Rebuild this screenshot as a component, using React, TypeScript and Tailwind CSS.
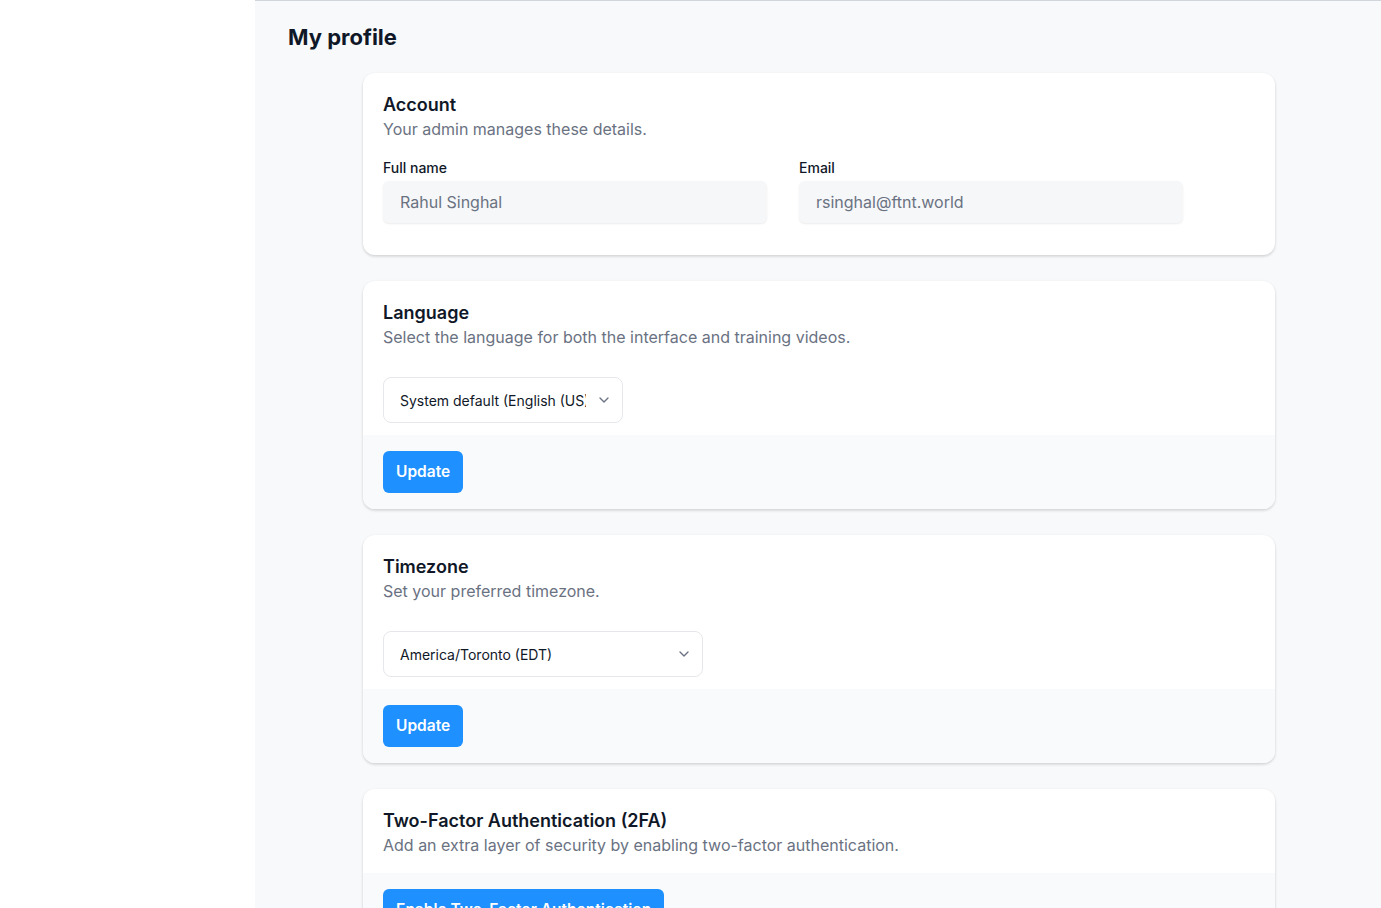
import { ChevronDown } from 'lucide-react'

function Section({
  title,
  subtitle,
  children,
  footer,
  bodyPad = 'pb-3',
}: {
  title: string
  subtitle: string
  children?: React.ReactNode
  footer?: React.ReactNode
  bodyPad?: string
}) {
  return (
    <div className="bg-white rounded-xl shadow-[0_1px_3px_rgba(0,0,0,0.12),0_2px_3px_rgba(0,0,0,0.06)] overflow-hidden">
      <div className={`px-5 pt-5 ${bodyPad}`}>
        <h2 className="text-lg leading-6 font-semibold text-gray-900">{title}</h2>
        <p className="text-base leading-6 text-gray-500">{subtitle}</p>
        {children}
      </div>
      {footer && <div className="bg-gray-50 px-5 py-4">{footer}</div>}
    </div>
  )
}

function Select({ value, width }: { value: string; width: string }) {
  return (
    <div className={`mt-7 flex items-center h-[46px] rounded-lg border border-gray-200 bg-white pl-4 pr-2.5 ${width}`}>
      <span className="flex-1 overflow-hidden whitespace-nowrap text-sm leading-5 pt-0.5 text-gray-900">{value}</span>
      <ChevronDown className="w-4 h-4 text-gray-500 ml-[10px] shrink-0" strokeWidth={2} />
    </div>
  )
}

function UpdateButton({ label = 'Update' }: { label?: string }) {
  return (
    <button className="h-[42px] px-[13px] rounded-md bg-[#1e90ff] text-white text-[15.5px] font-semibold">
      {label}
    </button>
  )
}

export default function App() {
  return (
    <div
      className="flex h-[908px] overflow-hidden bg-white"
      style={{ fontFamily: 'Inter, "Noto Sans", sans-serif' }}
    >
      {/* Sidebar */}
      <aside className="w-[255px] shrink-0 bg-white" />

      {/* Main */}
      <main className="flex-1 bg-[#f8f9fb] border-t border-gray-300 px-[33px] pt-5">
        <h1 className="text-[22px] leading-8 font-bold text-gray-900 mb-5">My profile</h1>

        <div className="w-[912px] ml-[75px] flex flex-col gap-[26px]">
          <Section title="Account" subtitle="Your admin manages these details." bodyPad="pb-8">
            <div className="grid grid-cols-2 gap-8 w-[800px] mt-[17px]">
              <div>
                <label className="block text-sm leading-5 font-medium text-gray-900">Full name</label>
                <div className="mt-[3px] h-[42px] flex items-center rounded-md bg-[#f6f7f9] pl-[17px] text-base text-gray-500 shadow-[0_1px_2px_rgba(0,0,0,0.08)]">
                  Rahul Singhal
                </div>
              </div>
              <div>
                <label className="block text-sm leading-5 font-medium text-gray-900">Email</label>
                <div className="mt-[3px] h-[42px] flex items-center rounded-md bg-[#f6f7f9] pl-[17px] text-base text-gray-500 shadow-[0_1px_2px_rgba(0,0,0,0.08)]">
                  rsinghal@ftnt.world
                </div>
              </div>
            </div>
          </Section>

          <Section
            title="Language"
            subtitle="Select the language for both the interface and training videos."
            footer={<UpdateButton />}
          >
            <Select value="System default (English (US))" width="w-[240px]" />
          </Section>

          <Section
            title="Timezone"
            subtitle="Set your preferred timezone."
            footer={<UpdateButton />}
          >
            <Select value="America/Toronto (EDT)" width="w-[320px]" />
          </Section>

          <Section
            title="Two-Factor Authentication (2FA)"
            subtitle="Add an extra layer of security by enabling two-factor authentication."
            bodyPad="pb-4"
            footer={<UpdateButton label="Enable Two-Factor Authentication" />}
          />
        </div>
      </main>
    </div>
  )
}
